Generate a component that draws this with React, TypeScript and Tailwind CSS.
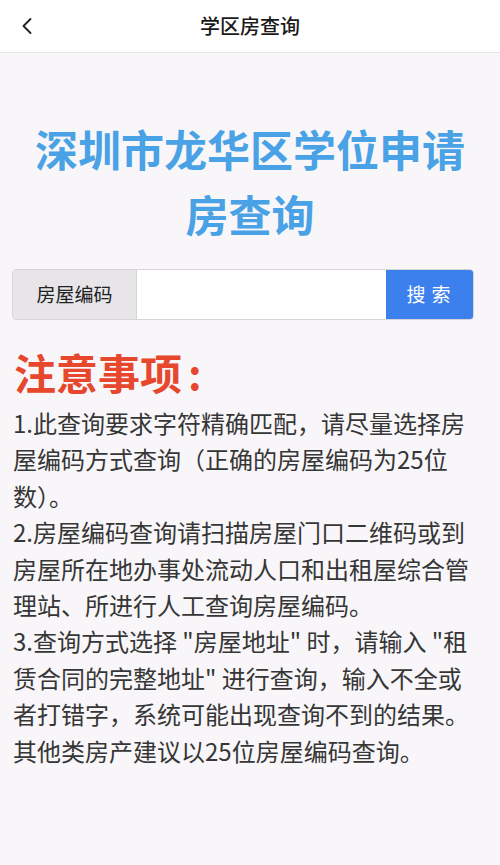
import { ChevronLeft } from "lucide-react";

const notes = [
  "1.此查询要求字符精确匹配，请尽量选择房屋编码方式查询（正确的房屋编码为25位数）。",
  "2.房屋编码查询请扫描房屋门口二维码或到房屋所在地办事处流动人口和出租屋综合管理站、所进行人工查询房屋编码。",
  "3.查询方式选择 \"房屋地址\" 时，请输入 \"租赁合同的完整地址\" 进行查询，输入不全或者打错字，系统可能出现查询不到的结果。其他类房产建议以25位房屋编码查询。",
];

export default function App() {
  return (
    <div
      className="min-h-[865px] w-[500px] bg-[#f8f6f9] text-[#333]"
      style={{ fontFamily: '"Noto Sans CJK SC", "Noto Sans", sans-serif' }}
    >
      {/* Nav bar */}
      <header className="relative flex h-[53px] items-center justify-center border-b border-[#e6e4e6] bg-white">
        <button className="absolute left-[13px] top-[12px] text-[#222]">
          <ChevronLeft size={28} strokeWidth={1.6} />
        </button>
        <h1 className="text-[20px] font-medium text-[#1a1a1a]">学区房查询</h1>
      </header>

      <main className="pl-[12px] pr-[26px]">
        {/* Title */}
        <h2 className="ml-[14px] mt-[63px] text-center text-[43px] font-bold leading-[65px] text-[#49a2e5]">
          深圳市龙华区学位申请
          <br />
          房查询
        </h2>

        {/* Search group */}
        <div className="mt-[23px] flex h-[51px] overflow-hidden rounded-[4px] border border-[#d6d4d7]">
          <div className="flex w-[123px] items-center justify-center bg-[#e7e5e8] text-[19px] text-[#222]">
            房屋编码
          </div>
          <input className="min-w-0 flex-1 border-l border-[#d6d4d7] bg-white outline-none" />
          <button className="w-[87px] bg-[#3c80ee] pl-[4px] text-[19px] tracking-[6px] text-white">搜索</button>
        </div>

        {/* Notes */}
        <h3 className="mt-[28px] pl-[2px] text-[42px] font-bold leading-[48px] text-[#e7472c]">
          注意事项<span className="ml-[6px]">:</span>
        </h3>
        <div className="mt-[9px] pl-[1px] text-[24px] leading-[36.4px] text-[#363636]">
          {notes.map((n, i) => (
            <p key={i}>{n}</p>
          ))}
        </div>
      </main>
    </div>
  );
}
